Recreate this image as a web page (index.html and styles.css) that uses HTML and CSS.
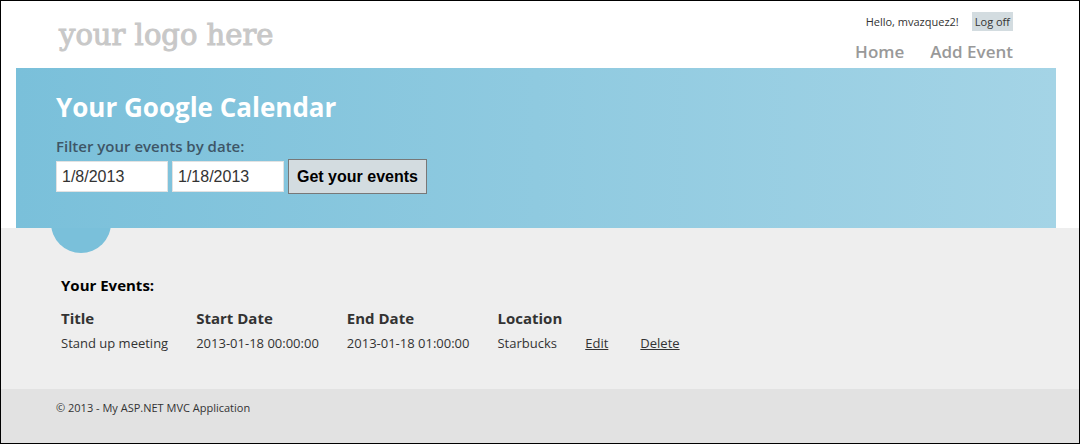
FILE: index.html
```html
<!DOCTYPE html>
<html lang="en">
<head>
<meta charset="utf-8">
<meta name="viewport" content="width=device-width, initial-scale=1">
<title>Your Google Calendar</title>
<link rel="stylesheet" href="styles.css">
</head>
<body>
<header class="site-header">
  <a class="logo" href="#">your logo here</a>
  <div class="header-side">
    <div class="login">
      <span>Hello, mvazquez2!</span>
      <button class="logoff" type="button">Log off</button>
    </div>
    <nav class="menu">
      <a href="#">Home</a>
      <a href="#">Add Event</a>
    </nav>
  </div>
</header>
<section class="featured">
  <h1>Your Google Calendar</h1>
  <h2 id="filter-label">Filter your events by date:</h2>
  <form class="filter" aria-labelledby="filter-label">
    <input type="text" aria-label="Start date" value="1/8/2013">
    <input type="text" aria-label="End date" value="1/18/2013">
    <button type="button">Get your events</button>
  </form>
</section>
<main class="content">
  <h3>Your Events:</h3>
  <table class="events">
    <thead>
      <tr><th>Title</th><th>Start Date</th><th>End Date</th><th>Location</th><th></th><th></th></tr>
    </thead>
    <tbody>
      <tr>
        <td>Stand up meeting</td>
        <td>2013-01-18 00:00:00</td>
        <td>2013-01-18 01:00:00</td>
        <td>Starbucks</td>
        <td><a href="#">Edit</a></td>
        <td><a href="#">Delete</a></td>
      </tr>
    </tbody>
  </table>
</main>
<footer class="site-footer">© 2013 - My ASP.NET MVC Application</footer>
</body>
</html>
```
FILE: styles.css
```css
* {
  box-sizing: border-box;
}

body {
  margin: 0;
  min-height: 100vh;
  display: flex;
  flex-direction: column;
  border: 1px solid #000;
  background: #fff;
  color: #333;
  font-family: "Segoe UI", "Open Sans", "Noto Sans", sans-serif;
  font-size: 13px;
}

h1,
h2,
h3 {
  margin: 0;
}

.site-header {
  display: flex;
  justify-content: space-between;
  padding: 11px 66px 4px 58px;
}

.logo {
  margin-top: 5px;
  color: #c8c8c8;
  font-family: Rockwell, "DejaVu Serif", serif;
  font-size: 29px;
  line-height: 36px;
  text-decoration: none;
  -webkit-text-stroke: 1px #c8c8c8;
}

.header-side {
  display: flex;
  flex-direction: column;
  align-items: flex-end;
  gap: 8px;
}

.login {
  display: flex;
  align-items: center;
  gap: 13px;
  font-size: 11px;
  line-height: 19px;
}

.logoff {
  padding: 0 3px;
  border: 0;
  background: #d3dce0;
  color: #333;
  font: inherit;
  line-height: 19px;
}

.menu {
  display: flex;
  gap: 26px;
  font-size: 17px;
  font-weight: 600;
  line-height: 25px;
}

.menu a {
  color: #999;
  text-decoration: none;
}

.featured {
  margin: 0 23px 0 15px;
  padding: 20px 40px 34px;
  background: linear-gradient(to right, #7ac0da, #a4d4e6);
}

.featured h1 {
  color: #fff;
  font-size: 26px;
  line-height: 38px;
}

.featured h2 {
  margin-top: 8px;
  color: #3e5667;
  font-size: 15px;
  font-weight: 600;
  line-height: 25px;
}

.filter {
  display: flex;
  align-items: center;
  gap: 4px;
  font-family: Arial, "Liberation Sans", sans-serif;
  font-size: 16px;
}

.filter input {
  width: 112px;
  height: 31px;
  padding: 0 5px;
  border: 1px solid #e2e2e2;
  background: #fff;
  color: #333;
  font: inherit;
}

.filter button {
  height: 35px;
  padding: 0 8px;
  border: 1px solid #787878;
  background: #d3dce0;
  color: #000;
  font: inherit;
  font-weight: 700;
}

.content {
  position: relative;
  flex: 1 0 auto;
  padding: 45px 60px 33px;
  background: #eee;
  overflow: hidden;
}

.content::before {
  content: "";
  position: absolute;
  top: -35px;
  left: 50px;
  width: 60px;
  height: 60px;
  border-radius: 50%;
  background: #7ac0da;
}

.content h3 {
  color: #000;
  font-size: 15px;
  line-height: 24px;
}

.events {
  margin-top: 8px;
  border-collapse: collapse;
}

.events th,
.events td {
  padding: 0 28px 0 0;
  text-align: left;
  white-space: nowrap;
}

.events th {
  font-size: 15px;
  line-height: 26px;
}

.events td {
  font-size: 13px;
  line-height: 24px;
}

.events th:nth-child(4) {
  padding-right: 23px;
}

.events td:nth-child(5) {
  padding-right: 32px;
}

.events a {
  color: #333;
}

.site-footer {
  padding: 9px 55px 25px;
  background: #e2e2e2;
  font-size: 11px;
  line-height: 20px;
}
```
